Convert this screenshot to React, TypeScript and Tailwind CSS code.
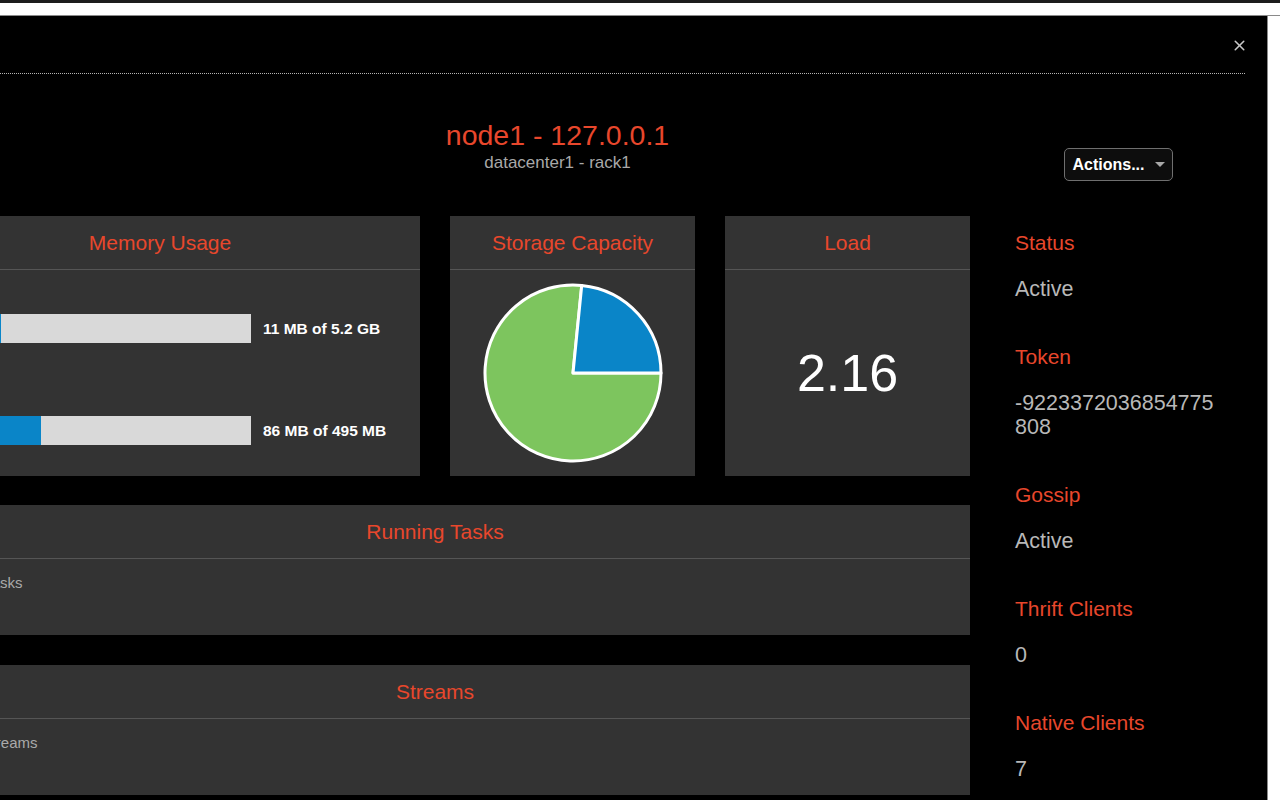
import { X } from 'lucide-react';

const memoryRows = [
  { label: 'Heap', fill: 3, text: '11 MB of 5.2 GB' },
  { label: 'Non-Heap', fill: 43, text: '86 MB of 495 MB' }
];

const details = [
  { label: 'Status', value: 'Active' },
  { label: 'Token', value: '-9223372036854775808' },
  { label: 'Gossip', value: 'Active' },
  { label: 'Thrift Clients', value: '0' },
  { label: 'Native Clients', value: '7' }
];

function PanelHeader({ title }: { title: string }) {
  return (
    <div className="flex h-[54px] shrink-0 items-center justify-center border-b border-[#555555] text-[21px] text-[#e8472c]">
      {title}
    </div>
  );
}

function Pie() {
  return (
    <svg width="184" height="184" viewBox="0 0 184 184">
      <path d="M92 92 L180 92 A88 88 0 1 1 100.74 4.44 Z" fill="#7dc55e" stroke="#ffffff" strokeWidth="3" strokeLinejoin="round" />
      <path d="M92 92 L100.74 4.44 A88 88 0 0 1 180 92 Z" fill="#0a85c8" stroke="#ffffff" strokeWidth="3" strokeLinejoin="round" />
    </svg>
  );
}

export default function App() {
  return (
    <div className="h-[800px] w-full overflow-hidden bg-white [font-family:'Liberation_Sans',Arial,sans-serif]">
      <div className="h-[3px] bg-[#1c1c1c]" />
      <div className="h-[13px] border-b border-[#8a8a8a] bg-white" />

      <div className="ml-[-130px] h-[784px] w-[1398px] border-r border-[#8a8a8a] bg-black pr-[22px]">
        <div className="flex h-[58px] items-center justify-end border-b border-dotted border-[#b5b5b5]">
          <X size={17} strokeWidth={2.2} className="mr-[-3px] mt-[2px] text-[#c8c8c8]" />
        </div>

        <div className="grid grid-cols-[1fr_auto_1fr] pt-[45px]">
          <div />
          <div className="flex flex-col items-center">
            <h1 className="text-[28.5px] leading-[32px] text-[#e8472c]">node1 - 127.0.0.1</h1>
            <div className="mt-[2px] text-[17px] leading-[20px] text-[#a8a8a8]">datacenter1 - rack1</div>
          </div>
          <div className="flex items-start justify-end">
            <button
              type="button"
              className="mr-[72px] mt-[29px] flex h-[33px] w-[109px] items-center justify-center gap-[10px] rounded-[5px] border border-[#6f6f6f] bg-[#0d0d0d] text-[16px] font-bold text-white"
            >
              Actions...
              <svg width="10" height="5" viewBox="0 0 10 5">
                <polygon points="0,0 10,0 5,5" fill="#a8a8a8" />
              </svg>
            </button>
          </div>
        </div>

        <div className="mt-[35px] flex gap-[45px] pl-[30px]">
          <div className="flex w-[1070px] flex-col">
            <div className="grid h-[260px] grid-cols-[520px_245px_245px] gap-[30px]">
              <div className="flex flex-col bg-[#333333]">
                <PanelHeader title="Memory Usage" />
                <div className="flex flex-col gap-[73px] pt-[44px]">
                  {memoryRows.map((row) => (
                    <div key={row.label} className="flex h-[29px] items-center">
                      <div className="w-[98px] pl-[15px] text-[15px] text-[#aaaaaa]">{row.label}</div>
                      <div className="flex h-[29px] w-[253px] bg-[#d9d9d9]">
                        <div className="h-full bg-[#0a85c8]" style={{ width: row.fill }} />
                      </div>
                      <div className="ml-[12px] text-[15.5px] font-bold text-white">{row.text}</div>
                    </div>
                  ))}
                </div>
              </div>

              <div className="flex flex-col bg-[#333333]">
                <PanelHeader title="Storage Capacity" />
                <div className="flex flex-1 items-center justify-center">
                  <Pie />
                </div>
              </div>

              <div className="flex flex-col bg-[#333333]">
                <PanelHeader title="Load" />
                <div className="flex flex-1 items-center justify-center text-[52px] leading-none text-white">2.16</div>
              </div>
            </div>

            <div className="mt-[29px] flex h-[130px] flex-col bg-[#333333]">
              <PanelHeader title="Running Tasks" />
              <div className="pl-[10px] pt-[15px] text-[15px] leading-[18px] text-[#aaaaaa]">No running tasks</div>
            </div>

            <div className="mt-[30px] flex h-[130px] flex-col bg-[#333333]">
              <PanelHeader title="Streams" />
              <div className="pl-[10px] pt-[15px] text-[15px] leading-[18px] text-[#aaaaaa]">No current streams</div>
            </div>
          </div>

          <div className="flex w-[205px] flex-col gap-[44px] pt-[15px]">
            {details.map((item) => (
              <div key={item.label} className="flex flex-col gap-[22px]">
                <div className="text-[21px] leading-[24px] text-[#e8472c]">{item.label}</div>
                <div className="break-all text-[21.5px] leading-[24px] text-[#b8b8b8]">{item.value}</div>
              </div>
            ))}
          </div>
        </div>
      </div>
    </div>
  );
}
